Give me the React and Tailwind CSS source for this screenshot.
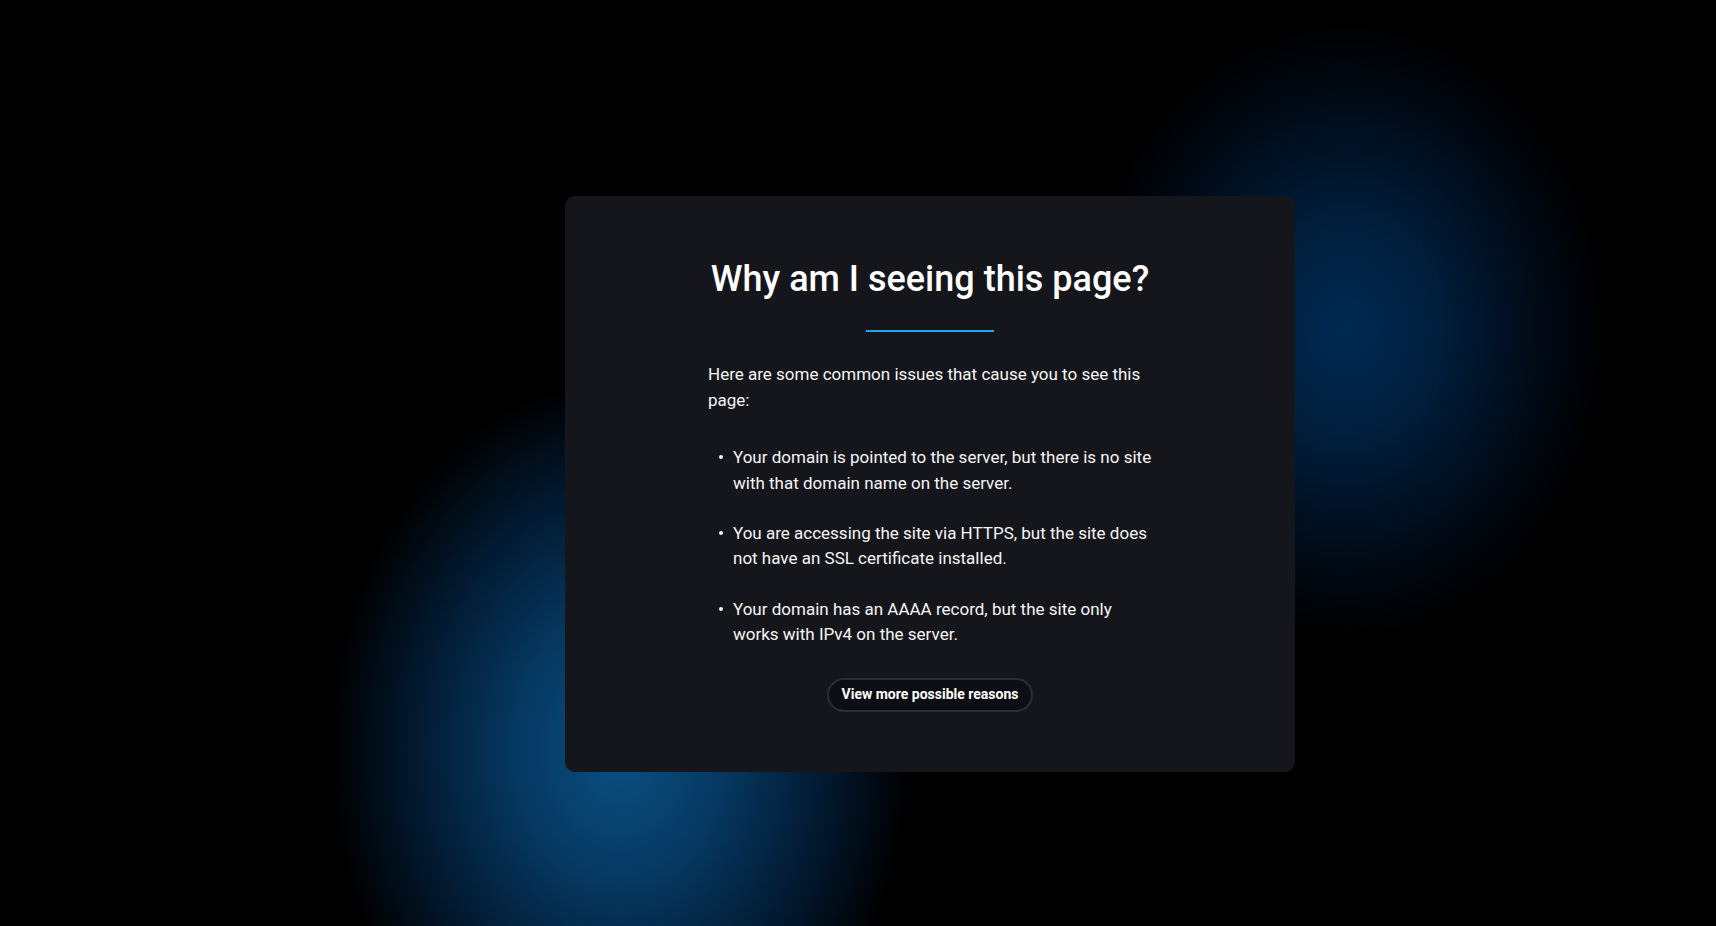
const reasons = [
  "Your domain is pointed to the server, but there is no site with that domain name on the server.",
  "You are accessing the site via HTTPS, but the site does not have an SSL certificate installed.",
  "Your domain has an AAAA record, but the site only works with IPv4 on the server.",
];

const App = () => {
  return (
    <div className="relative min-h-screen overflow-hidden bg-black font-['Roboto',sans-serif] text-[#f5f5f5]">
      {/* background glows */}
      <div className="pointer-events-none absolute left-[1086px] top-[20px] h-[620px] w-[520px] bg-[radial-gradient(closest-side,#002a52_0%,#001e3c_35%,#000c1a_70%,transparent_100%)]" />
      <div className="pointer-events-none absolute left-[330px] top-[380px] h-[740px] w-[580px] bg-[radial-gradient(closest-side,#0a5083_0%,#063962_35%,#021a32_70%,transparent_100%)]" />

      <div className="relative flex justify-center pl-[144px] pt-[196px]">
        <div className="w-[730px] rounded-[10px] bg-[#15161b] px-[143px] pb-[60px] pt-[62px]">
          <h1 className="text-center text-[36px] font-medium leading-[43px] text-white">
            Why am I seeing this page?
          </h1>
          <div className="mx-auto mt-[29px] h-[2px] w-[128px] bg-[#1aa8ea]" />

          <p className="mt-[30px] text-[17px] leading-[25.6px]">
            Here are some common issues that cause you to see this page:
          </p>

          <ul className="mt-[32px] flex flex-col gap-[24.5px]">
            {reasons.map((item) => (
              <li key={item} className="flex text-[17px] leading-[25.6px]">
                <span className="w-[25px] shrink-0 pl-[11px] pt-[10px]">
                  <span className="block h-[4px] w-[4px] rounded-full bg-[#f5f5f5]" />
                </span>
                <span>{item}</span>
              </li>
            ))}
          </ul>

          <div className="mt-[30px] flex justify-center">
            <button className="h-[34px] rounded-full border-2 border-[#2a2e37] bg-[#0c0e13] px-[13px] text-[14px] font-bold text-white">
              View more possible reasons
            </button>
          </div>
        </div>
      </div>
    </div>
  );
};

export default App;
